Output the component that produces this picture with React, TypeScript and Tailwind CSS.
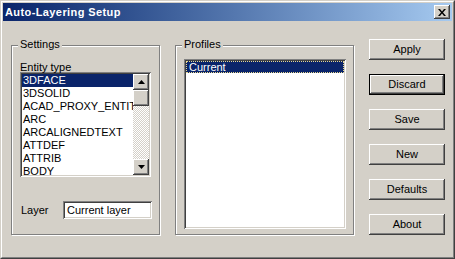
import React from 'react';

const font = { fontFamily: '"Liberation Sans", Arial, sans-serif' };

const entities = ['3DFACE', '3DSOLID', 'ACAD_PROXY_ENTITY', 'ARC', 'ARCALIGNEDTEXT', 'ATTDEF', 'ATTRIB', 'BODY'];
const buttons = ['Apply', 'Discard', 'Save', 'New', 'Defaults', 'About'];

const raised =
    'shadow-[inset_-1px_-1px_0_#404040,inset_1px_1px_0_#ffffff,inset_-2px_-2px_0_#808080,inset_2px_2px_0_#d4d0c8]';
const sunken =
    'shadow-[inset_1px_1px_0_#808080,inset_-1px_-1px_0_#ffffff,inset_2px_2px_0_#404040,inset_-2px_-2px_0_#d4d0c8]';

const Arrow = ({ up }: { up?: boolean }) => (
    <svg width="7" height="4" viewBox="0 0 7 4">
        {up ? <path d="M3.5 0 L7 4 L0 4 Z" fill="#000" /> : <path d="M0 0 L7 0 L3.5 4 Z" fill="#000" />}
    </svg>
);

const Group = ({ label, className, children }: any) => (
    <div className={`relative border border-[#808080] shadow-[inset_1px_1px_0_#ffffff,1px_1px_0_#ffffff] ${className}`}>
        <span className="absolute -top-[8px] left-[6px] bg-[#d4d0c8] px-[2px] text-[11px] leading-[13px]">{label}</span>
        {children}
    </div>
);

export default function App() {
    return (
        <div className="w-[455px] h-[259px] bg-[#d4d0c8] text-black" style={font}>
            {/* window frame */}
            <div className="w-full h-full border border-t-[#d4d0c8] border-l-[#d4d0c8] border-r-[#404040] border-b-[#404040]">
                <div className="w-full h-full border border-t-white border-l-white border-r-[#808080] border-b-[#808080] p-px flex flex-col">
                    {/* title bar */}
                    <div className="h-[18px] flex items-center justify-between pl-[2px] pr-[2px] bg-gradient-to-r from-[#0a246a] to-[#a6caf0]">
                        <span className="text-white font-bold text-[11px] leading-[13px] tracking-[0.4px]">Auto-Layering Setup</span>
                        <div className={`w-[16px] h-[14px] bg-[#d4d0c8] flex items-center justify-center ${raised}`}>
                            <svg width="8" height="7" viewBox="0 0 8 7">
                                <path d="M0 0h2l2 2.5L6 0h2L5 3.5 8 7H6L4 4.5 2 7H0l3-3.5z" fill="#000" />
                            </svg>
                        </div>
                    </div>

                    {/* body */}
                    <div className="flex items-start">
                        <Group label="Settings" className="ml-[8px] mt-[24px] w-[149px] h-[190px]">
                            <div className="pl-[8px] pt-[15px] text-[11px] leading-[13px]">Entity type</div>
                            <div className={`ml-[8px] mt-[-2px] w-[131px] h-[105px] bg-white p-[2px] flex ${sunken}`}>
                                <div className="flex-1 overflow-hidden text-[11px] leading-[13px]">
                                    {entities.map((e, i) => (
                                        <div
                                            key={e}
                                            className={`h-[13px] pl-[1px] whitespace-nowrap ${i === 0 ? 'bg-[#0a246a] text-white' : ''}`}
                                        >
                                            {e}
                                        </div>
                                    ))}
                                </div>
                                <div className="w-[16px] flex flex-col bg-[repeating-conic-gradient(#ffffff_0_25%,#d4d0c8_0_50%)] bg-[length:2px_2px]">
                                    <div className={`h-[16px] bg-[#d4d0c8] flex items-center justify-center ${raised}`}>
                                        <Arrow up />
                                    </div>
                                    <div className={`h-[16px] bg-[#d4d0c8] ${raised}`} />
                                    <div className="flex-1" />
                                    <div className={`h-[16px] bg-[#d4d0c8] flex items-center justify-center ${raised}`}>
                                        <Arrow />
                                    </div>
                                </div>
                            </div>
                            <div className="flex items-center mt-[24px] pl-[9px]">
                                <span className="w-[42px] text-[11px] leading-[13px]">Layer</span>
                                <div className={`w-[89px] h-[18px] bg-white pl-[4px] text-[11px] leading-[18px] ${sunken}`}>
                                    Current layer
                                </div>
                            </div>
                        </Group>

                        <Group label="Profiles" className="ml-[15px] mt-[24px] w-[179px] h-[190px]">
                            <div className={`ml-[8px] mt-[13px] w-[162px] h-[170px] bg-white p-[2px] ${sunken}`}>
                                <div className="h-[12px] bg-[#0a246a] text-white text-[11px] leading-[10px] pl-[2px] border border-dotted border-[#e8d890]">
                                    Current
                                </div>
                            </div>
                        </Group>

                        <div className="ml-[15px] mt-[18px] w-[76px] flex flex-col gap-[14px]">
                            {buttons.map((b) => (
                                <div
                                    key={b}
                                    className={`h-[21px] bg-[#d4d0c8] flex items-center justify-center text-[11px] leading-[13px] ${b === 'Discard' ? 'border border-black shadow-[inset_-1px_-1px_0_#404040,inset_1px_1px_0_#ffffff,inset_-2px_-2px_0_#808080]' : raised}`}
                                >
                                    {b}
                                </div>
                            ))}
                        </div>
                    </div>
                </div>
            </div>
        </div>
    );
}
